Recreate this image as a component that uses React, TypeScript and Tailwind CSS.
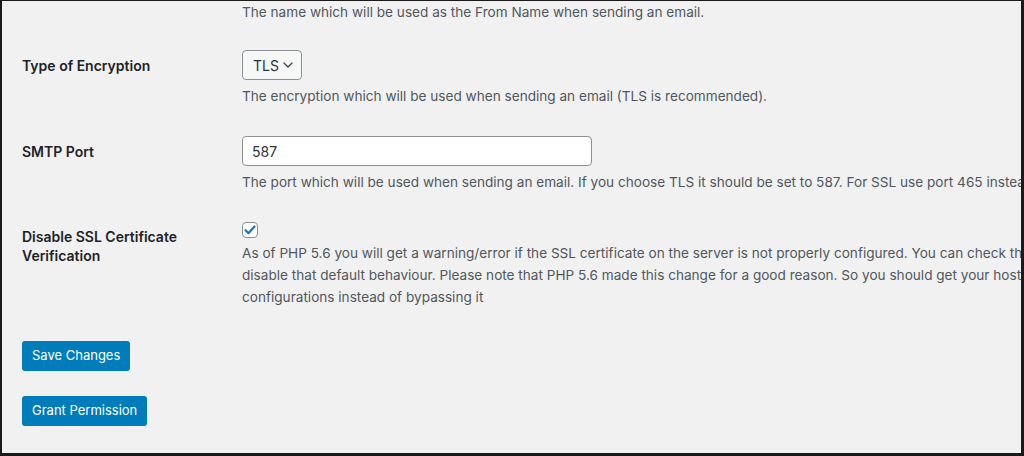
import React from 'react'

const FONT = "font-['Inter','Liberation_Sans',sans-serif]"

const Desc = ({ lines, className = '' }: { lines: string[]; className?: string }) => (
  <div className={`text-[13.6px] leading-[22px] text-[#50575e] ${className}`}>
    {lines.map((l, i) => (
      <div key={i} className="whitespace-nowrap">
        {l}
      </div>
    ))}
  </div>
)

const Row = ({ label, children, labelClass }: { label?: React.ReactNode; children: React.ReactNode; labelClass: string }) => (
  <div className="flex">
    <div className={`w-[220px] shrink-0 text-[14px] font-semibold text-[#1d2327] ${labelClass}`}>{label}</div>
    <div className="min-w-0 flex-1">{children}</div>
  </div>
)

const App: React.FC = () => {
  return (
    <div
      className={`box-border h-[456px] w-[1024px] overflow-hidden border-t-[1px] border-l-[2px] border-r-[3px] border-b-[3px] border-[#1a1a1a] bg-[#f1f1f1] pl-[20px] ${FONT}`}
    >
      <div className="flex flex-col">
        <Row labelClass="">
          <div className="whitespace-nowrap pt-[1px] text-[13.6px] leading-[20px] text-[#50575e]">
            The name which will be used as the From Name when sending an email.
          </div>
        </Row>

        <div className="mt-[28px]">
          <Row label="Type of Encryption" labelClass="pt-[6px] leading-[20px]">
            <div className="flex h-[30px] w-[60px] items-center justify-between rounded-[4px] border border-[#8c8f94] bg-[#f6f7f7] pl-[10px] pr-[8px] text-[14px] text-[#2c3338]">
              <span>TLS</span>
              <svg width="10" height="6" viewBox="0 0 10 6" fill="none">
                <path d="M1 1l4 4 4-4" stroke="#3c434a" strokeWidth="1.3" strokeLinecap="round" strokeLinejoin="round" />
              </svg>
            </div>
            <Desc
              className="mt-[5px]"
              lines={['The encryption which will be used when sending an email (TLS is recommended).']}
            />
          </Row>
        </div>

        <div className="mt-[29px]">
          <Row label="SMTP Port" labelClass="pt-[6px] leading-[20px]">
            <div className="flex h-[30px] w-[350px] items-center rounded-[4px] border border-[#8c8f94] bg-white px-[9px] text-[14px] text-[#2c3338]">
              587
            </div>
            <Desc
              className="mt-[5px]"
              lines={[
                'The port which will be used when sending an email. If you choose TLS it should be set to 587. For SSL use port 465 instead.',
              ]}
            />
          </Row>
        </div>

        <div className="mt-[29px]">
          <Row
            label={
              <>
                Disable SSL Certificate
                <br />
                Verification
              </>
            }
            labelClass="pt-[5px] leading-[19px]"
          >
            <div className="flex h-[16px] w-[16px] items-center justify-center rounded-[4px] border border-[#8c8f94] bg-white">
              <svg width="12" height="10" viewBox="0 0 12 10" fill="none">
                <path d="M1.5 5.2l3 3 6-6.7" stroke="#2271b1" strokeWidth="2.2" strokeLinecap="round" strokeLinejoin="round" />
              </svg>
            </div>
            <Desc
              className="mt-[4px]"
              lines={[
                'As of PHP 5.6 you will get a warning/error if the SSL certificate on the server is not properly configured. You can check the SSL configuration',
                'disable that default behaviour. Please note that PHP 5.6 made this change for a good reason. So you should get your host to fix your SSL',
                'configurations instead of bypassing it',
              ]}
            />
          </Row>
        </div>

        <div className="mt-[33px] flex flex-col items-start gap-[25px]">
          <button className="h-[30px] rounded-[3px] bg-[#007cba] px-[10px] text-[13px] text-white">Save Changes</button>
          <button className="h-[30px] rounded-[3px] bg-[#007cba] px-[10px] text-[13px] text-white">Grant Permission</button>
        </div>
      </div>
    </div>
  )
}

export default App
